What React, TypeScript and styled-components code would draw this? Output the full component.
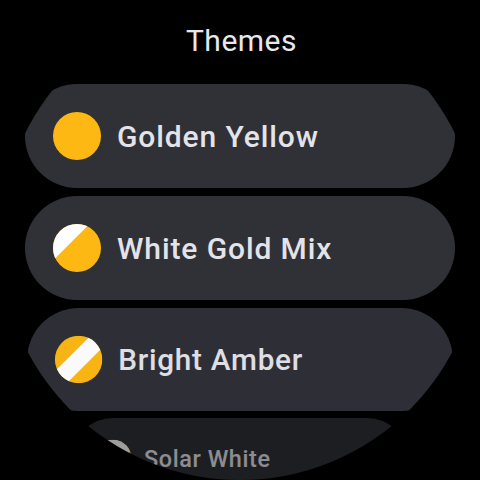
import React from 'react';
import styled, { createGlobalStyle } from 'styled-components';

const GOLD = '#fdb813';

const Global = createGlobalStyle`
  body { margin: 0; background: #000; }
`;

const Watch = styled.main`
  width: 480px;
  height: 480px;
  overflow: hidden;
  background: #000;
  clip-path: circle(240px at 240px 240px);
  font-family: Roboto, sans-serif;
  display: flex;
  flex-direction: column;
  align-items: center;
`;

const Title = styled.h1`
  flex: none;
  margin: 0;
  padding-left: 3px;
  height: 84px;
  line-height: 82px;
  font-size: 30px;
  font-weight: 400;
  letter-spacing: 0.5px;
  color: #e8e8ea;
`;

const List = styled.div`
  flex: none;
  display: flex;
  flex-direction: column;
  align-items: center;
  gap: 8px;
`;

/* Chips shrink and fade as they approach the bottom of the round display. */
const Chip = styled.button<{ $scale: number; $opacity: number; $tone: string }>`
  box-sizing: border-box;
  flex: none;
  width: 430px;
  height: 104px;
  margin: 0 0 ${(p) => (p.$scale - 1) * 104 - (p.$scale < 1 ? 0.6 : 0)}px;
  border: 0;
  border-radius: 52px;
  padding: 0 28px;
  background: ${(p) => p.$tone};
  color: #e3e3ea;
  display: flex;
  align-items: center;
  gap: 16px;
  transform: ${(p) => (p.$scale < 1 ? `scale(${p.$scale})` : 'none')};
  transform-origin: top center;
  opacity: ${(p) => p.$opacity};
`;

const Label = styled.span<{ $tracking: number }>`
  font: 500 30px Roboto, sans-serif;
  letter-spacing: ${(p) => p.$tracking}px;
  white-space: nowrap;
`;

const SwatchSvg = styled.svg`
  display: block;
  width: 48px;
  height: 48px;
  flex: none;
  border-radius: 50%;
`;

type Pattern = 'solid' | 'split' | 'stripe' | 'light';

function Swatch({ pattern }: { pattern: Pattern }) {
  return (
    <SwatchSvg viewBox="0 0 48 48" aria-hidden="true">
      <rect width="48" height="48" fill={GOLD} />
      {pattern === 'split' && <path d="M0 0H36.5L0 36.5Z" fill="#fff" />}
      {pattern === 'stripe' && <path d="M36 0H60L0 60V36Z" fill="#fff" />}
      {pattern === 'light' && <path d="M0 0H61L0 61Z" fill="#fff" />}
    </SwatchSvg>
  );
}

interface Theme {
  name: string;
  pattern: Pattern;
  scale: number;
  opacity: number;
  tracking: number;
  tone: string;
}

const themes: Theme[] = [
  { name: 'Golden Yellow', pattern: 'solid', scale: 1, opacity: 1, tracking: 0.9, tone: '#303136' },
  { name: 'White Gold Mix', pattern: 'split', scale: 1, opacity: 1, tracking: 0.9, tone: '#303136' },
  { name: 'Bright Amber', pattern: 'stripe', scale: 0.99, opacity: 0.98, tracking: 0.75, tone: '#2f3038' },
  { name: 'Solar White', pattern: 'light', scale: 0.78, opacity: 0.62, tracking: 0.75, tone: '#303136' },
];

export default function App() {
  return (
    <Watch>
      <Global />
      <Title>Themes</Title>
      <List>
        {themes.map((t) => (
          <Chip key={t.name} $scale={t.scale} $opacity={t.opacity} $tone={t.tone}>
            <Swatch pattern={t.pattern} />
            <Label $tracking={t.tracking}>{t.name}</Label>
          </Chip>
        ))}
      </List>
    </Watch>
  );
}
